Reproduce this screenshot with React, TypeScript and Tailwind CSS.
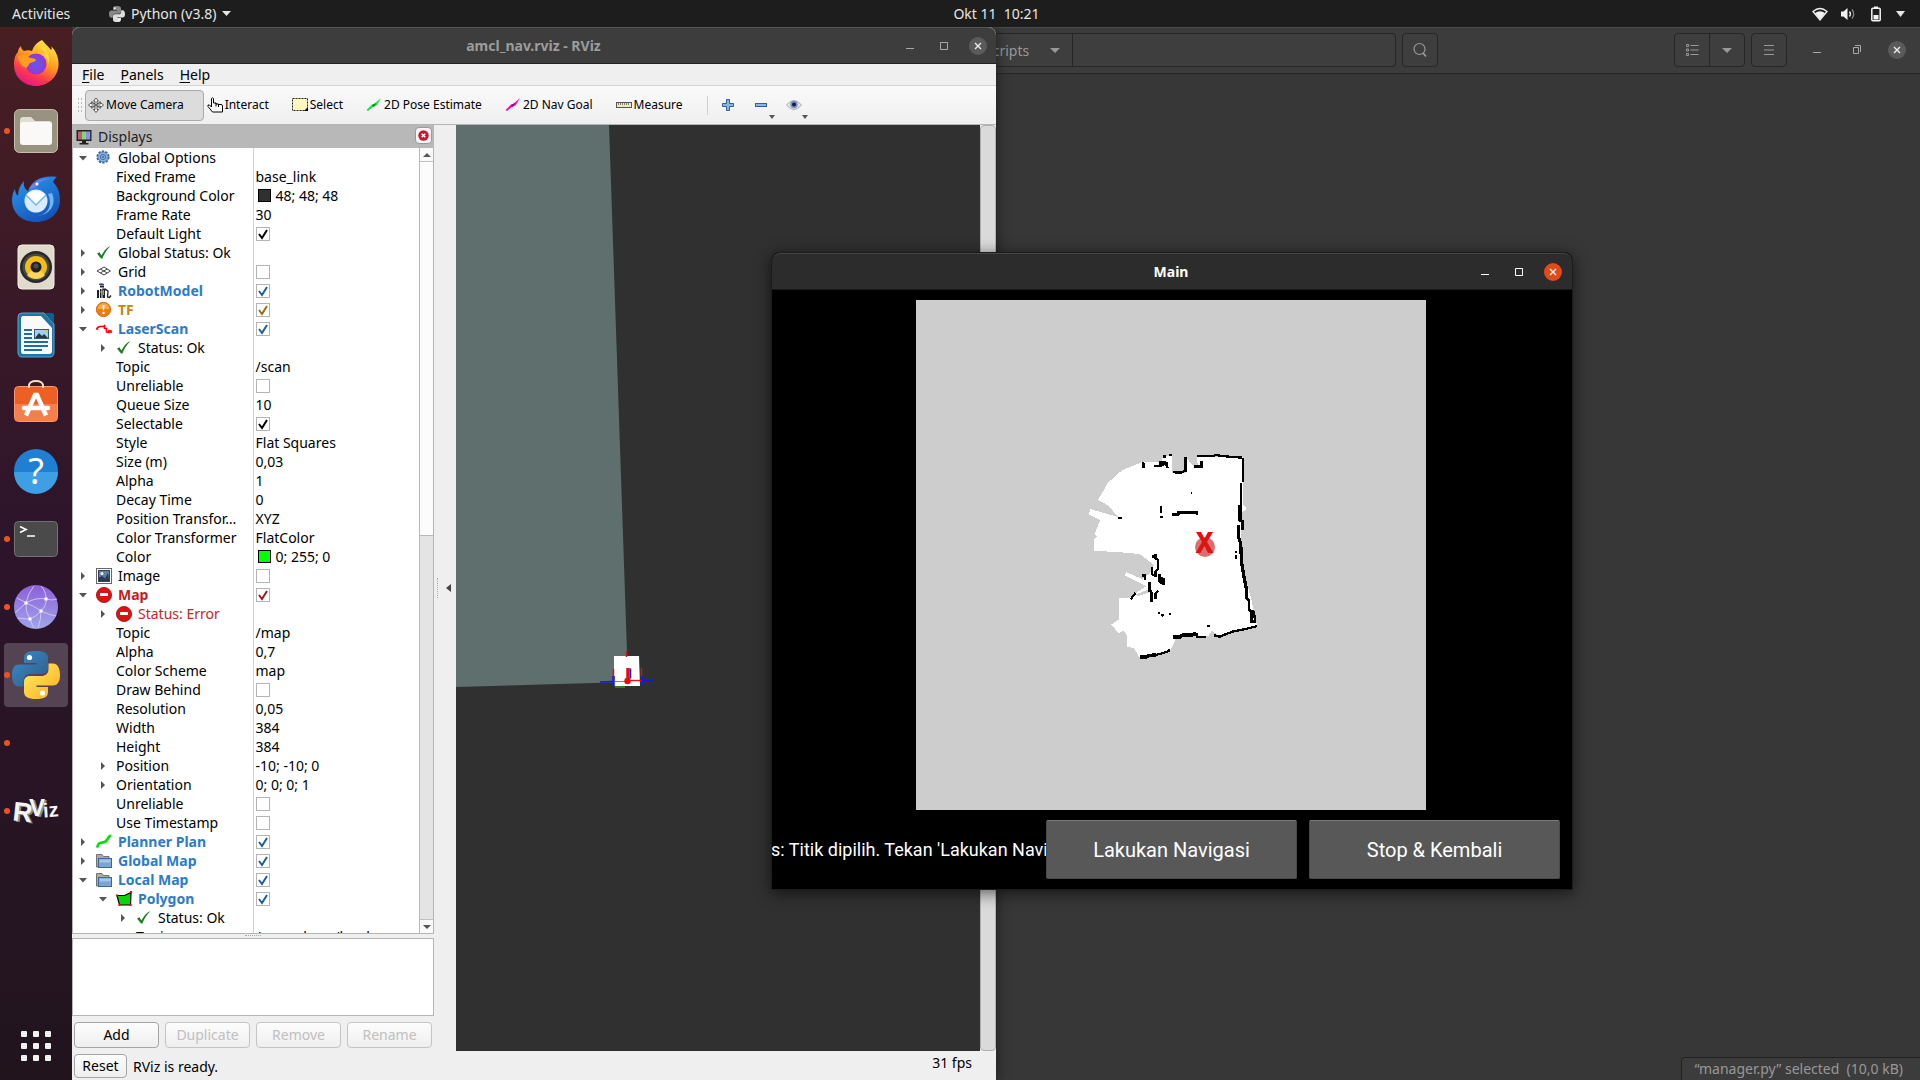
import React from "react";

const CHECK = "M3 7 L6 11 L11 3";

type IconName =
  | "gear" | "ok" | "grid" | "robot" | "warn" | "laser" | "image" | "error" | "plan" | "folder" | "polygon";

type Tone = "plain" | "blue" | "amber" | "red" | "redtext";

interface Row {
  level: number;
  label: string;
  arrow?: "open" | "closed";
  icon?: IconName;
  tone?: Tone;
  value?: string;
  check?: boolean;
  swatch?: "dark" | "green";
}

const rows: Row[] = [
  { level: 0, label: "Global Options", arrow: "open", icon: "gear" },
  { level: 1, label: "Fixed Frame", value: "base_link" },
  { level: 1, label: "Background Color", value: "48; 48; 48", swatch: "dark" },
  { level: 1, label: "Frame Rate", value: "30" },
  { level: 1, label: "Default Light", check: true },
  { level: 0, label: "Global Status: Ok", arrow: "closed", icon: "ok" },
  { level: 0, label: "Grid", arrow: "closed", icon: "grid", check: false },
  { level: 0, label: "RobotModel", arrow: "closed", icon: "robot", tone: "blue", check: true },
  { level: 0, label: "TF", arrow: "closed", icon: "warn", tone: "amber", check: true },
  { level: 0, label: "LaserScan", arrow: "open", icon: "laser", tone: "blue", check: true },
  { level: 1, label: "Status: Ok", arrow: "closed", icon: "ok" },
  { level: 1, label: "Topic", value: "/scan" },
  { level: 1, label: "Unreliable", check: false },
  { level: 1, label: "Queue Size", value: "10" },
  { level: 1, label: "Selectable", check: true },
  { level: 1, label: "Style", value: "Flat Squares" },
  { level: 1, label: "Size (m)", value: "0,03" },
  { level: 1, label: "Alpha", value: "1" },
  { level: 1, label: "Decay Time", value: "0" },
  { level: 1, label: "Position Transfor…", value: "XYZ" },
  { level: 1, label: "Color Transformer", value: "FlatColor" },
  { level: 1, label: "Color", value: "0; 255; 0", swatch: "green" },
  { level: 0, label: "Image", arrow: "closed", icon: "image", check: false },
  { level: 0, label: "Map", arrow: "open", icon: "error", tone: "red", check: true },
  { level: 1, label: "Status: Error", arrow: "closed", icon: "error", tone: "redtext" },
  { level: 1, label: "Topic", value: "/map" },
  { level: 1, label: "Alpha", value: "0,7" },
  { level: 1, label: "Color Scheme", value: "map" },
  { level: 1, label: "Draw Behind", check: false },
  { level: 1, label: "Resolution", value: "0,05" },
  { level: 1, label: "Width", value: "384" },
  { level: 1, label: "Height", value: "384" },
  { level: 1, label: "Position", arrow: "closed", value: "-10; -10; 0" },
  { level: 1, label: "Orientation", arrow: "closed", value: "0; 0; 0; 1" },
  { level: 1, label: "Unreliable", check: false },
  { level: 1, label: "Use Timestamp", check: false },
  { level: 0, label: "Planner Plan", arrow: "closed", icon: "plan", tone: "blue", check: true },
  { level: 0, label: "Global Map", arrow: "closed", icon: "folder", tone: "blue", check: true },
  { level: 0, label: "Local Map", arrow: "open", icon: "folder", tone: "blue", check: true },
  { level: 1, label: "Polygon", arrow: "open", icon: "polygon", tone: "blue", check: true },
  { level: 2, label: "Status: Ok", arrow: "closed", icon: "ok" },
  { level: 2, label: "Topic", value: "/move_base/local_cos…" },
];

const toneClass: Record<Tone, string> = {
  plain: "text-black",
  blue: "font-bold text-[#2b7bc8]",
  amber: "font-bold text-[#c8860a]",
  red: "font-bold text-[#c41e1e]",
  redtext: "text-[#cc2222]",
};

const checkClass: Record<Tone, string> = {
  plain: "text-black",
  blue: "text-[#1f5f9f]",
  amber: "text-[#a06a10]",
  red: "text-[#a01818]",
  redtext: "text-[#a01818]",
};

const indentClass = ["pl-0.5", "pl-[22px]", "pl-[42px]"];

function TreeIcon({ name }: { name: IconName }) {
  const box = "block h-4 w-4 shrink-0";
  switch (name) {
    case "gear":
      return (
        <svg className={box} viewBox="0 0 16 16">
          <circle cx="7" cy="7" r="5.6" fill="none" stroke="#3465a4" strokeWidth="2" strokeDasharray="2.4 1.1" />
          <circle cx="7" cy="7" r="4.9" fill="#8fb3de" stroke="#4a7ab8" strokeWidth="0.8" />
          <circle cx="7" cy="7" r="2.6" fill="none" stroke="#3465a4" strokeWidth="0.9" />
          <circle cx="7" cy="7" r="1" fill="#3465a4" />
        </svg>
      );
    case "ok":
      return (
        <svg className={box} viewBox="0 0 16 16">
          <path d="M1 8.6 3.4 7.2 5.4 10.6C7.6 6.4 10 3.2 13.6 1.2l.2.5C10.6 4.8 8.3 8.6 6.4 13.4L5 13.6Z" fill="#1e7d22" />
        </svg>
      );
    case "grid":
      return (
        <svg className={box} viewBox="0 0 16 16" fill="none" stroke="#444" strokeWidth="1">
          <path d="M1 7 8 3 14.5 7 8 11Z M4.3 5 11.2 9 M4.3 9 11.2 5" />
        </svg>
      );
    case "robot":
      return (
        <svg className={box} viewBox="0 0 16 16">
          <path d="M3 1q2-1.5 5 0v1H3z" fill="#2847b5" />
          <path d="M4 2.500h4v2H4z" fill="#222" />
          <path d="M1 7h2v8H1zM4 6h1.500v9H4zM6.200 5.500H10v2H9V15H6.500z" fill="#222" />
          <path d="M10 6.500 12 8l-.5 6 2 .5 1.500-2" fill="none" stroke="#222" strokeWidth="1.300" />
          <path d="M3 9h4M7.500 7v5" stroke="#bbb" strokeWidth="0.800" />
        </svg>
      );
    case "warn":
      return (
        <svg className={box} viewBox="0 0 16 16">
          <circle cx="7.500" cy="7.500" r="7.200" fill="#f07c0a" stroke="#c65f08" strokeWidth="0.800" />
          <path d="M1.500 7a6 6 0 0 1 12 0Z" fill="#f9a548" />
          <path d="M6.500 3h2l-.4 5.500h-1.200z" fill="#fff" />
          <circle cx="7.500" cy="11" r="1.200" fill="#fff" />
        </svg>
      );
    case "laser":
      return (
        <svg className={box} viewBox="0 0 16 16" fill="none" stroke="#f00" strokeWidth="1.700" strokeLinejoin="round">
          <path d="M0 8H1.500V6.500L4 5.500H7.500L8.500 4.500V7.500H10.500V11L13 11.500V9.500L15 10V12" />
        </svg>
      );
    case "image":
      return (
        <svg className={box} viewBox="0 0 16 16">
          <rect x="0.500" y="0.500" width="15" height="15" fill="#fff" stroke="#666" />
          <rect x="2.500" y="2.500" width="11" height="11" fill="#5d7fae" stroke="#32435f" />
          <path d="M3 9.500 6 8l3 2.500L12 5l1 6v2H3z" fill="#2b3a50" />
          <circle cx="6" cy="5.500" r="1.500" fill="#fdf6c0" />
        </svg>
      );
    case "error":
      return (
        <svg className={box} viewBox="0 0 16 16">
          <circle cx="8" cy="8" r="7.600" fill="#dd1212" stroke="#a30b0b" strokeWidth="0.800" />
          <rect x="4" y="6" width="8" height="3" rx="0.500" fill="#fff" />
        </svg>
      );
    case "plan":
      return (
        <svg className={box} viewBox="0 0 16 16">
          <path d="M1.500 12.500C3 7 5.500 9.500 8.500 8 12 6.500 12 3 14 2" fill="none" stroke="#0adf0a" strokeWidth="2.800" strokeLinecap="round" />
        </svg>
      );
    case "folder":
      return (
        <svg className={box} viewBox="0 0 16 16">
          <path d="M.5 14V1.500h5.500l1.500 2H13V14z" fill="#aaa" stroke="#666" strokeWidth="0.900" />
          <rect x="2.500" y="5.500" width="13" height="9" fill="#7ba5d8" stroke="#3b66a0" />
          <path d="M3.500 6.500h11v3h-11z" fill="#a5c4ea" />
        </svg>
      );
    case "polygon":
      return (
        <svg className={box} viewBox="0 0 16 16">
          <path d="M1 4.500 8.500 4.500 15 1.500 14.500 14H3.500z" fill="#0bd40b" stroke="#000" strokeWidth="1.200" />
          <path d="M0 3.500h2v2H0zM14 0h2v2h-2zM13.500 13h2v2h-2zM2.500 13h2v2h-2z" fill="#f00" />
        </svg>
      );
  }
}

function TreeArrow({ state }: { state?: "open" | "closed" }) {
  return (
    <span className="flex w-[15px] shrink-0 justify-center">
      {state && (
        <svg width="8" height="8" viewBox="0 0 8 8" fill="#555" aria-hidden="true">
          <path d={state === "open" ? "M0 2h8L4 6.500z" : "M2 0v8L6 4z"} />
        </svg>
      )}
    </span>
  );
}

function TreeRow({ row, id }: { row: Row; id: string }) {
  const tone = row.tone ?? "plain";
  return (
    <tr className="h-[19px]">
      <td className="overflow-hidden border-r border-[#d4d4d4] p-0">
        <div className={"flex h-[19px] items-center whitespace-nowrap " + indentClass[row.level]}>
          <TreeArrow state={row.arrow} />
          {row.icon ? (
            <span className="mx-[6px]"><TreeIcon name={row.icon} /></span>
          ) : (
            <span className="w-[6px] shrink-0" />
          )}
          {row.check === undefined ? (
            <span className={toneClass[tone]}>{row.label}</span>
          ) : (
            <label htmlFor={id} className={toneClass[tone]}>{row.label}</label>
          )}
        </div>
      </td>
      <td className="overflow-hidden p-0">
        <div className="flex h-[19px] items-center whitespace-nowrap pl-0.5">
          {row.check !== undefined && (
            <span className="relative h-[14px] w-[14px]">
              <input id={id} type="checkbox" defaultChecked={row.check} className="peer block h-[14px] w-[14px] appearance-none border border-[#b4b4b4] bg-white" />
              <svg viewBox="0 0 14 14" className={"pointer-events-none invisible absolute inset-0 h-[14px] w-[14px] peer-checked:visible " + checkClass[tone]} fill="none" stroke="currentColor" strokeWidth="2">
                <path d={CHECK} />
              </svg>
            </span>
          )}
          {row.swatch === "dark" && <span className="ml-0.5 mr-[5px] h-[13px] w-[13px] border border-black bg-[#303030]" />}
          {row.swatch === "green" && <span className="ml-0.5 mr-[5px] h-[13px] w-[13px] border border-black bg-[#00ff00]" />}
          {row.value}
        </div>
      </td>
    </tr>
  );
}

function PythonLogo({ mono }: { mono?: boolean }) {
  return (
    <svg viewBox="0 0 48 48" className="h-full w-full">
      <defs>
        <linearGradient id="pyBlue" x1="0" y1="0" x2="1" y2="1"><stop offset="0" stopColor="#3b8ccb" /><stop offset="1" stopColor="#2c5b85" /></linearGradient>
        <linearGradient id="pyYellow" x1="0" y1="0" x2="1" y2="1"><stop offset="0" stopColor="#ffec6a" /><stop offset="1" stopColor="#fcae1a" /></linearGradient>
      </defs>
      <path d="M24 0c-9 0-12 2.500-12 7v5h12.500v1.500H7C2 13.500 0 18 0 24s2 11.500 7 11.500h4.500V30c0-4.500 3-7 7.500-7h11c4 0 6-2.500 6-6V7c0-4.500-4-7-12-7Z" fill={mono ? "#888" : "url(#pyBlue)"} />
      <path d="M24 48c9 0 12-2.500 12-7v-5H24.500v-1.500H41c5 0 7-4.500 7-10.500s-2-11.500-7-11.500h-4.500V18c0 4.500-3 7-7.500 7H18c-4 0-6 2.500-6 6v10c0 4.500 4 7 12 7Z" fill={mono ? "#ddd" : "url(#pyYellow)"} />
      <circle cx="17.500" cy="6.500" r="2.600" fill="#fff" />
      <circle cx="30.500" cy="42" r="2.600" fill="#fff" />
    </svg>
  );
}

const dock: { name: string; dot?: boolean; active?: boolean; art: React.ReactNode }[] = [
  {
    name: "Firefox",
    art: (
      <svg viewBox="0 0 48 48" className="h-12 w-12">
        <defs>
          <linearGradient id="ffBody" x1="0.800" y1="0" x2="0.300" y2="1"><stop offset="0" stopColor="#fff04a" /><stop offset="0.450" stopColor="#ff9a1f" /><stop offset="0.750" stopColor="#ff3a4a" /><stop offset="1" stopColor="#e3138a" /></linearGradient>
          <radialGradient id="ffGlobe"><stop offset="0" stopColor="#5a5cf0" /><stop offset="1" stopColor="#9a35d0" /></radialGradient>
        </defs>
        <path d="M30 1c4 5 7 7 9 10 1-1 1-2 0-4 5 5 8 12 7.500 19C46 38 36 47 24 47S2 38 2 26c0-6 1-10 4-13 0-2 1-4 3-6 0 2 1 4 3 5 3-1 5-1 8 0 2-6 6-9 10-11Z" fill="url(#ffBody)" />
        <circle cx="24" cy="25" r="10.500" fill="url(#ffGlobe)" />
        <path d="M6 17c5-2 9-1 12 2 3 0 6 1 6 2-1 2-4 2-6 3-2 2-2 4-4 5-5-2-8-7-8-12Z" fill="#ff9c22" />
        <path d="M30 5c5 6 8 12 7 20-1-5-4-9-8-11 2 0 4 1 5 2-1-4-4-6-6-7Z" fill="#ffdc3c" />
      </svg>
    ),
  },
  {
    name: "Files",
    dot: true,
    art: (
      <svg viewBox="0 0 48 48" className="h-12 w-12">
        <rect x="2.500" y="2.500" width="43" height="43" rx="5" fill="#99927f" stroke="#c5bfae" />
        <path d="M8 13q0-3 3-3h8l4 4h14q3 0 3 3v5H8z" fill="#e2ded3" />
        <rect x="8" y="15" width="32" height="23" rx="3" fill="#faf9f7" />
      </svg>
    ),
  },
  {
    name: "Thunderbird",
    art: (
      <svg viewBox="0 0 48 48" className="h-12 w-12">
        <defs><linearGradient id="tb" x1="0" y1="0" x2="0.600" y2="1"><stop offset="0" stopColor="#2c9df5" /><stop offset="1" stopColor="#1554b8" /></linearGradient></defs>
        <path d="M12 6c-1 5 1 8 4 10C20 5 30 0 45 2c-2 1-3 3-4 5 5 5 7 11 7 18 0 13-10 22-24 22S0 38 0 25c0-4 1-8 3-11 0 3 1 5 3 7 0-6 2-11 6-15Z" fill="url(#tb)" />
        <path d="M17 15c4-8 11-12 21-11-8 1-12 4-14 8z" fill="#7a78e8" />
        <path d="M36 19c5 12 0 21-12 22 14-1 21-11 16-23Z" fill="#6ab8fa" />
        <circle cx="24" cy="26" r="11.500" fill="#d8ecfd" />
        <path d="M14 20q10-8 20 0L24.500 30z" fill="#fff" />
        <path d="M14 20l10 10 10-10" fill="none" stroke="#74b7f0" strokeWidth="1.500" />
        <circle cx="25" cy="9" r="1.500" fill="#fff" />
      </svg>
    ),
  },
  {
    name: "Rhythmbox",
    art: (
      <svg viewBox="0 0 48 48" className="h-12 w-12">
        <rect x="6" y="2" width="36" height="44" rx="4" fill="#dfdacb" stroke="#f3f0e6" />
        <circle cx="24" cy="24" r="16" fill="#26282c" />
        <circle cx="24" cy="24" r="13.500" fill="#4a4a42" />
        <circle cx="24" cy="24" r="11" fill="#f3bd18" />
        <path d="M24 24 15 32a12 12 0 0 0 18 0z" fill="#fbd65a" />
        <circle cx="24" cy="24" r="5.500" fill="#1d1f22" />
        <circle cx="24" cy="23" r="2.500" fill="#4a4d50" />
      </svg>
    ),
  },
  {
    name: "LibreOffice Writer",
    art: (
      <svg viewBox="0 0 48 48" className="h-12 w-12">
        <path d="M10 2h22l10 11v28q0 5-4 5H10q-4 0-4-5V6q0-4 4-4Z" fill="#1b77a8" stroke="#54a8d0" />
        <path d="M33 2h7q2 0 2 2v8Z" fill="#0e5f92" />
        <path d="M11 5h18l11 12v23q0 3-3 3H11q-2 0-2-3V8q0-3 2-3Z" fill="#fafafa" />
        <path d="M12 19h8M12 23h8M12 27h8M12 31h24M12 35h24M12 39h18" stroke="#1b6fa5" strokeWidth="1.800" />
        <rect x="22.500" y="18.500" width="14" height="9" fill="#9fd0ee" stroke="#2a5f80" />
        <path d="M23 27l4-5 3 3 2-2 4 4z" fill="#333" />
        <path d="M32 19h4v4z" fill="#f4c430" />
      </svg>
    ),
  },
  {
    name: "Ubuntu Software",
    art: (
      <svg viewBox="0 0 48 48" className="h-12 w-12">
        <rect x="2.500" y="7.500" width="43" height="35" rx="4" fill="#ee5f25" stroke="#f79a6e" />
        <path d="M3 25h42v14q0 3-3 3H6q-3 0-3-3z" fill="#f47f4d" />
        <path d="M17 9V6q1-4 7-4t7 4v3" fill="none" stroke="#f4dfc0" strokeWidth="2" />
        <path d="M14 36.500 23 16h2l9 20.500" fill="none" stroke="#fff" strokeWidth="4.500" />
        <path d="M12 29h24" stroke="#fff" strokeWidth="4.500" strokeLinecap="round" />
      </svg>
    ),
  },
  {
    name: "Help",
    art: (
      <svg viewBox="0 0 48 48" className="h-12 w-12">
        <circle cx="24" cy="24" r="22" fill="#1f7fd2" />
        <path d="M2 25a22 22 0 0 0 44 0z" fill="#3f9fe4" />
        <text x="24" y="37" textAnchor="middle" fontFamily="Noto Sans, sans-serif" fontSize="36" fill="#fff">?</text>
      </svg>
    ),
  },
  {
    name: "Terminal",
    dot: true,
    art: (
      <svg viewBox="0 0 48 48" className="h-12 w-12">
        <rect x="2.500" y="6.500" width="43" height="35" rx="4" fill="#4a4a4a" stroke="#727272" />
        <path d="M8 11.500l6 3-6 3M15 21h8" fill="none" stroke="#fff" strokeWidth="1.700" />
      </svg>
    ),
  },
  {
    name: "Network",
    dot: true,
    art: (
      <svg viewBox="0 0 48 48" className="h-12 w-12">
        <defs><linearGradient id="net" x1="0" y1="0" x2="0" y2="1"><stop offset="0" stopColor="#8d5fd8" /><stop offset="1" stopColor="#9fa6ec" /></linearGradient></defs>
        <circle cx="24" cy="24" r="22" fill="url(#net)" />
        <path d="M5 15q10 5 9 5Q24 14 34 16q6 2 11 0M14 20q8 3 15 8 8 4 15 5M14 20q-1 9 4 16 2 6 4 9M34 16q1 6-5 12-4 5-11 8-6 0-12-1M34 16q0-8-5-13M14 20q2-10 8-17M3 30l11-10M29 28q0 9-3 17" fill="none" stroke="#d9c8f6" strokeWidth="0.900" />
        <path d="M12.500 18.500h3v3h-3zM32.500 14.500h3v3h-3zM27.500 26.500h3v3h-3zM16.500 34.500h3v3h-3z" fill="#fff" />
      </svg>
    ),
  },
  { name: "Python (v3.8)", dot: true, active: true, art: <span className="block h-12 w-12"><PythonLogo /></span> },
  { name: "Running application", dot: true, art: null },
  {
    name: "RViz",
    dot: true,
    art: (
      <svg viewBox="0 0 48 48" className="h-12 w-12" fontFamily="Liberation Sans, sans-serif" fontWeight="bold">
        <g fill="#888">
          <text x="3" y="35" fontSize="27" transform="rotate(6 8 24)">R</text>
          <text x="19" y="30" fontSize="24">V</text>
        </g>
        <g fill="#f5f5f5">
          <text x="1" y="34" fontSize="27" transform="rotate(6 8 24)">R</text>
          <text x="17" y="29" fontSize="24">V</text>
          <text x="31" y="30" fontSize="20" transform="rotate(-4 38 24)">iz</text>
        </g>
      </svg>
    ),
  },
];

function Dock() {
  return (
    <nav aria-label="Dock" className="flex w-[72px] shrink-0 flex-col bg-linear-to-b from-[#481e22] via-[#2d142b] via-50% to-[#21141d] pt-0.5">
      {dock.map((d) => (
        <div key={d.name} className="relative flex h-[68px] items-center justify-center">
          <button aria-label={d.name} className={"flex h-16 w-16 items-center justify-center rounded " + (d.active ? "bg-white/20" : "")}>{d.art}</button>
          {d.dot && <span className="absolute left-1 h-1.5 w-1.5 rounded-full bg-[#e95420]" />}
        </div>
      ))}
      <button aria-label="Show Applications" className="mx-auto mb-[19px] mt-auto grid grid-cols-3 gap-1.5">
        {Array.from({ length: 9 }, (_, i) => (
          <span key={i} className="h-1.5 w-1.5 rounded-[1px] bg-[#f2f2f2]" />
        ))}
      </button>
    </nav>
  );
}

function TopBar() {
  return (
    <header className="grid h-[27px] shrink-0 grid-cols-3 items-center bg-[#1d1d1d] text-[14px] text-[#e6e6e6]">
      <div className="flex items-center pl-3">
        <button className="w-[63px] text-left">Activities</button>
        <button className="ml-[34px] flex items-center gap-1.5">
          <span className="h-4 w-4"><PythonLogo mono /></span>
          Python (v3.8)
          <Caret className="h-[5px] w-[9px]" />
        </button>
      </div>
      <button className="justify-self-center whitespace-pre pl-[73px]">{"Okt 11  10:21"}</button>
      <button aria-label="System menu" className="flex items-center gap-3 justify-self-end pr-[15px]">
        <svg width="16" height="14" viewBox="0 0 16 14">
          <path d="M1 4.500Q8-1.500 15 4.500L8 13z" fill="none" stroke="#f2f2f2" strokeWidth="1.300" />
          <path d="M3 6q5-3.500 10 0L8 12.500z" fill="#f2f2f2" />
        </svg>
        <svg width="16" height="14" viewBox="0 0 16 14">
          <path d="M1 4.500h2.500L7.500 1v12L3.500 9.500H1z" fill="#f2f2f2" />
          <path d="M9.500 4.500q2 2.500 0 5" fill="none" stroke="#f2f2f2" strokeWidth="1.300" />
          <path d="M12 2.500q3.500 4.500 0 9" fill="none" stroke="#888" strokeWidth="1.300" />
        </svg>
        <svg width="16" height="16" viewBox="0 0 16 16">
          <path d="M6 0.500h4v2H6z" fill="#f2f2f2" />
          <rect x="3.800" y="2.200" width="8.400" height="12.600" rx="1" fill="none" stroke="#f2f2f2" strokeWidth="1.500" />
          <rect x="5.500" y="9" width="5" height="4.500" fill="#f2f2f2" />
        </svg>
        <Caret className="h-[6px] w-[9px]" />
      </button>
    </header>
  );
}

function Caret({ className }: { className: string }) {
  return (
    <svg viewBox="0 0 10 6" preserveAspectRatio="none" className={"fill-current " + className} aria-hidden="true">
      <path d="M0 0h10L5 6z" />
    </svg>
  );
}

function WindowButtons({ variant }: { variant: "plain" | "active" | "restore" }) {
  const close = variant === "active" ? "bg-[#e2491b] text-white" : "bg-[#5a5a5a] text-[#f0f0f0]";
  const tone = variant === "active" ? "text-white" : "text-[#a8a8a8]";
  const gap = variant === "restore" ? "gap-[22px]" : "gap-4";
  return (
    <div className={"flex items-center " + gap + " " + tone}>
      <button aria-label="Minimize" className="grid h-[18px] w-[18px] place-items-center">
        <svg width="10" height="10" viewBox="0 0 10 10"><path d="M1 7.500h8" stroke="currentColor" /></svg>
      </button>
      <button aria-label="Maximize" className="grid h-[18px] w-[18px] place-items-center">
        {variant === "restore" ? (
          <svg width="10" height="10" viewBox="0 0 10 10" fill="none" stroke="currentColor"><path d="M1.500 2.500h5v6h-5zM3 .5h5.500V7" /></svg>
        ) : (
          <svg width="10" height="10" viewBox="0 0 10 10" fill="none" stroke="currentColor"><path d="M1.500 1.500h7v7h-7z" /></svg>
        )}
      </button>
      <button aria-label="Close" className={"grid h-[18px] w-[18px] place-items-center rounded-full " + close}>
        <svg width="8" height="8" viewBox="0 0 8 8"><path d="M1 1l6 6M7 1L1 7" stroke="currentColor" strokeWidth="1.300" /></svg>
      </button>
    </div>
  );
}

function FilesWindow() {
  const frame = "border border-[#262626] bg-[#3e3e3e]";
  return (
    <section aria-label="Files" className="flex h-full flex-col bg-[#373737] text-[#989898]">
      <header className="flex h-[47px] shrink-0 items-center border-b border-t border-b-[#262626] border-t-[#4c4c4c] bg-[#3c3c3c] pb-px pr-3.5">
        <span className="w-1/2" />
        <div className="flex">
          <button className={"-ml-3 flex h-[34px] w-[96px] items-center justify-between pl-2 pr-3 text-[14px] " + frame}>
            scripts
            <Caret className="h-[5px] w-[10px]" />
          </button>
          <input aria-label="Location" className={"h-[34px] w-[323px] rounded-r border-l-0 outline-none " + frame} />
        </div>
        <button aria-label="Search" className={"ml-1.5 grid h-[34px] w-9 place-items-center rounded " + frame}>
          <svg width="16" height="16" viewBox="0 0 16 16" fill="none" stroke="currentColor" strokeWidth="1.200"><circle cx="7.500" cy="7" r="5.500" /><path d="M11 11l3 3.500" strokeWidth="1.800" /></svg>
        </button>
        <div className="ml-auto flex">
          <button aria-label="List view" className={"grid h-[34px] w-9 place-items-center rounded-l " + frame}>
            <svg width="14" height="14" viewBox="0 0 14 14" fill="none" stroke="currentColor"><path d="M1.500 1.500h2v2h-2zM1.500 6h2v2h-2zM1.500 10.500h2v2h-2z" /><path d="M5.500 2.500h8M5.500 7h8M5.500 11.500h8" strokeWidth="1.200" /></svg>
          </button>
          <button aria-label="View options" className={"-ml-px grid h-[34px] w-9 place-items-center rounded-r " + frame}><Caret className="h-[5px] w-[10px]" /></button>
        </div>
        <button aria-label="Menu" className={"ml-1.5 mr-[21px] grid h-[34px] w-9 place-items-center rounded " + frame}>
          <svg width="12" height="12" viewBox="0 0 12 12" stroke="currentColor" strokeWidth="1.200"><path d="M1 1.500h10M1 6h10M1 10.500h10" /></svg>
        </button>
        <WindowButtons variant="restore" />
      </header>
      <div className="flex-1" />
      <p className="self-end whitespace-pre rounded-tl border-l border-t border-[#222] bg-[#3c3c3c] pl-3 pr-[17px] text-[14px] leading-[22px]">{"“manager.py” selected  (10,0 kB)"}</p>
    </section>
  );
}

function ToolIcon({ name }: { name: string }) {
  const box = "block h-4 w-4";
  switch (name) {
    case "move":
      return (
        <svg className={box} viewBox="0 0 16 16" fill="#fff" stroke="#444" strokeWidth="0.900">
          <path d="M8 1l2.500 3H9v3h3.500V5.500L15.500 8l-3 2.500V9H9v3.500h1.500L8 15.500l-2.500-3H7V9H3.500v1.500L.5 8l3-2.500V7H7V4H5.500z" />
          <path d="M3.500 4.500 12.500 11.500M12.500 4.500 3.500 11.500" />
        </svg>
      );
    case "hand":
      return (
        <svg className={box} viewBox="0 0 16 16" fill="#fff" stroke="#000" strokeWidth="1">
          <path d="M4.500 10V1.500q1-1.500 2 0V6h2.500v1h2.500v.5H14q1.500 0 1.500 1.500v6h-10L1 9.500V8h1.500z" />
          <path d="M9 6v3.500M11.500 7v3" />
        </svg>
      );
    case "select":
      return (
        <svg className={box} viewBox="0 0 16 16">
          <rect x="0.500" y="1.500" width="15" height="12" fill="#fff6c0" stroke="#222" strokeDasharray="2 1" />
          <path d="M12 14l4-4v4z" fill="#000" />
        </svg>
      );
    case "pose":
      return <svg className={box} viewBox="0 0 16 16"><path d="M.5 13l5.500-5.500h1.500L15 1l-4.500 7.500-2.500.5-6 5z" fill="#0bea32" /><path d="M6 8l4-2-1 3-2 1z" fill="#098a20" /></svg>;
    case "goal":
      return <svg className={box} viewBox="0 0 16 16"><path d="M.5 13l5.500-5.500h1.500L15 1l-4.500 7.500-2.500.5-6 5z" fill="#f50ad2" /><path d="M6 8l4-2-1 3-2 1z" fill="#8d0878" /></svg>;
    default:
      return (
        <svg className={box} viewBox="0 0 16 16">
          <rect x="0.500" y="5.500" width="15" height="5" fill="#f3e8b4" stroke="#555" />
          <path d="M2.500 6v2M4.500 6v2M6.500 6v2M8.500 6v2M10.500 6v2M12.500 6v2" stroke="#666" strokeWidth="0.800" />
        </svg>
      );
  }
}

const tools = [
  { icon: "move", label: "Move Camera", active: true },
  { icon: "hand", label: "Interact" },
  { icon: "select", label: "Select" },
  { icon: "pose", label: "2D Pose Estimate" },
  { icon: "goal", label: "2D Nav Goal" },
  { icon: "measure", label: "Measure" },
];

function Toolbar() {
  return (
    <div role="toolbar" className="flex h-[39px] shrink-0 items-center border-b border-[#b5b5b5] bg-linear-to-b from-[#fafafa] to-[#efefef] pl-[5px] text-[12px] text-black">
      <span className="mr-[3px] h-4 w-[5px] bg-[radial-gradient(#bbb_1px,transparent_1px)] bg-[size:3px_4px]" />
      {tools.map((t) => (
        <button
          key={t.label}
          className={"flex h-[31px] items-center gap-0.5 whitespace-nowrap rounded-sm border pl-0.5 pr-[19px] " + (t.active ? "border-[#aaa] bg-[#dcdcdc]" : "border-transparent")}
        >
          <ToolIcon name={t.icon} />
          {t.label}
        </button>
      ))}
      <span className="ml-1 mr-3 h-[19px] w-px bg-[#d0d0d0]" />
      <button aria-label="Add tool">
        <svg width="16" height="16" viewBox="0 0 16 16"><path d="M6.500 2.500h3v4h4v3h-4v4h-3v-4h-4v-3h4z" fill="#8db4e2" stroke="#2f5f9f" /></svg>
      </button>
      <button aria-label="Remove tool" className="relative ml-[17px]">
        <svg width="16" height="16" viewBox="0 0 16 16"><rect x="2.500" y="6.500" width="11" height="3" fill="#8db4e2" stroke="#2f5f9f" /></svg>
        <Caret className="absolute -bottom-1.5 -right-1.5 h-[4px] w-[6px] text-[#555]" />
      </button>
      <button aria-label="View options" className="relative ml-[17px]">
        <svg width="16" height="16" viewBox="0 0 16 16">
          <path d="M.5 8Q8-1 15.500 8 8 17 .5 8Z" fill="#e6e6e6" stroke="#aaa" />
          <circle cx="8" cy="7.500" r="3.800" fill="#7d92c8" /><circle cx="8" cy="7.500" r="2" fill="#141c40" />
        </svg>
        <Caret className="absolute -bottom-1.5 -right-1.5 h-[4px] w-[6px] text-[#555]" />
      </button>
    </div>
  );
}

function DisplaysPanel() {
  const btn = "h-[26px] flex-1 rounded-sm border bg-linear-to-b from-[#fdfdfd] to-[#eeeeee] leading-none";
  return (
    <div className="flex w-[362px] shrink-0 flex-col">
      <div className="flex h-[23px] shrink-0 items-center bg-[#b8b8b8] pl-1 pr-0.5 text-[#222]">
        <svg width="16" height="16" viewBox="0 0 16 16" className="mr-[6px]">
          <rect x="0.500" y="1" width="15" height="11" fill="#222" />
          <path d="M2 2.500h4v8H2z" fill="#b9606a" /><path d="M6 2.500h4v8H6z" fill="#7ed87e" /><path d="M10 2.500h4.200v8H10z" fill="#8f8fe0" />
          <path d="M6 12h4v2h2.500v1.500h-9V14H6z" fill="#222" />
        </svg>
        <h2>Displays</h2>
        <button aria-label="Close Displays" className="mb-0.5 ml-auto grid h-[17px] w-[17px] place-items-center rounded-sm border border-[#999] bg-[#f5f5f5]">
          <svg width="11" height="11" viewBox="0 0 11 11"><circle cx="5.500" cy="5.500" r="5.200" fill="#cc1433" /><path d="M3.700 3.700l3.600 3.600M7.300 3.700 3.700 7.300" stroke="#fff" strokeWidth="1.400" /></svg>
        </button>
      </div>
      <div className="flex min-h-0 flex-1 basis-0 overflow-hidden border-b border-l border-r border-[#b5b5b5] bg-white">
        <div className="min-w-0 flex-1 overflow-hidden">
          <table className="w-full table-fixed border-collapse leading-[19px]">
            <colgroup><col className="w-[180px]" /><col /></colgroup>
            <tbody>
              {rows.map((r, i) => (
                <TreeRow key={i} row={r} id={"display-" + i} />
              ))}
            </tbody>
          </table>
        </div>
        <div className="flex w-[14px] flex-col border-l border-[#b8b8b8] bg-[#e4e4e4] text-[#555]" aria-hidden="true">
          <span className="grid h-[14px] place-items-center border-b border-[#c0c0c0] bg-[#fafafa]"><Caret className="h-[4px] w-[8px] rotate-180" /></span>
          <span className="h-[374px] border-b border-[#b8b8b8] bg-[#fcfcfc]" />
          <span className="mt-auto grid h-[14px] place-items-center border-t border-[#c0c0c0] bg-[#fafafa]"><Caret className="h-[4px] w-[8px]" /></span>
        </div>
      </div>
      <span className="mx-auto mb-0.5 h-0.5 w-4 border-b border-dotted border-[#aaa]" />
      <textarea readOnly aria-label="Description" className="block h-[78px] shrink-0 resize-none border border-[#b5b5b5] bg-white outline-none" />
      <div className="mb-[3px] mt-1.5 flex shrink-0 gap-1.5 px-0.5">
        <button className={btn + " border-[#a5a5a5]"}>Add</button>
        <button disabled className={btn + " border-[#c4c4c4] text-[#c0c0c0]"}>Duplicate</button>
        <button disabled className={btn + " border-[#c4c4c4] text-[#c0c0c0]"}>Remove</button>
        <button disabled className={btn + " border-[#c4c4c4] text-[#c0c0c0]"}>Rename</button>
      </div>
    </div>
  );
}

function Scene() {
  return (
    <div className="relative min-w-0 flex-1 overflow-hidden bg-[#303030]">
      <svg width="524" height="600" viewBox="456 125 524 600" className="block">
        <path d="M456 125H609L628 682 456 687Z" fill="#5f6f6d" />
        <path d="M614 656h25l1 30h-26z" fill="#fff" />
        <path d="M626.500 651v6M613.500 669v9M641.500 668v8" stroke="#d01515" strokeWidth="1.500" />
        <path d="M600 682l14-.5M640 680.500h14" stroke="#1414e0" strokeWidth="1.500" />
        <path d="M613.500 676v10M642 676v9" stroke="#1a1ae0" strokeWidth="2.500" />
        <path d="M615 681.500h12M615 687h10" stroke="#22c322" strokeWidth="1.200" />
        <path d="M628 680.500h13" stroke="#f01010" strokeWidth="1.400" />
        <path d="M628 668v12" stroke="#e01010" strokeWidth="3.500" /><path d="M630.500 668.500v10" stroke="#1818e8" strokeWidth="1.500" />
        <circle cx="627.500" cy="681" r="3.200" fill="#e80c0c" />
      </svg>
    </div>
  );
}

function RvizWindow() {
  return (
    <section aria-label="RViz" className="absolute inset-y-0 left-0 flex w-1/2 flex-col rounded-t-lg bg-[#efefef] text-[14px] text-black shadow-[0_0_14px_rgba(0,0,0,0.55)]">
      <header className="flex h-[37px] shrink-0 items-center rounded-t-lg border-b border-t border-b-[#222] border-t-[#555] bg-[#3d3d3d] pr-[9px]">
        <h1 className="flex-1 pl-[94px] text-center font-bold text-[#9c9c9c]">amcl_nav.rviz - RViz</h1>
        <WindowButtons variant="plain" />
      </header>
      <div role="menubar" className="flex h-[22px] shrink-0 items-center gap-4 border-b border-[#d5d5d5] pl-2.5">
        {["File", "Panels", "Help"].map((m) => (
          <button key={m} role="menuitem"><span className="underline underline-offset-2">{m[0]}</span>{m.slice(1)}</button>
        ))}
      </div>
      <Toolbar />
      <div className="flex min-h-0 flex-1">
        <DisplaysPanel />
        <div className="flex w-[22px] shrink-0 items-center pl-[3px]">
          <span className="h-5 border-l border-dotted border-[#aaa]" />
          <button aria-label="Collapse panel" className="ml-2"><svg width="5" height="8" viewBox="0 0 5 8"><path d="M5 0v8L0 4z" fill="#444" /></svg></button>
        </div>
        <Scene />
        <span className="w-4 shrink-0 rounded border border-[#b0b0b0] bg-[#dadada]" />
      </div>
      <footer className="flex h-[29px] shrink-0 items-center pl-0.5 pr-6 pt-px">
        <button className="mr-1.5 h-6 w-[53px] rounded-sm border border-[#a5a5a5] bg-linear-to-b from-[#fdfdfd] to-[#eeeeee] leading-none">Reset</button>
        <span>RViz is ready.</span>
        <span className="ml-auto pb-2">31 fps</span>
      </footer>
    </section>
  );
}

function OccupancyMap() {
  return (
    <svg width="510" height="510" viewBox="0 0 510 510" className="block bg-[#cdcdcd]" role="img" aria-label="Occupancy map">
      <g transform="translate(143 130) scale(0.333333)" shapeRendering="crispEdges">
        <path
          fill="#fff"
          d="M248 97 308 95 312 78H340V128H380V80L402 108 416 104 414 80 552 82V225L560 230V240L548 246V300L545 330 550 410 575 500 595 590 480 617 458 602 448 618 418 622 412 608 345 622 350 630 335 660 242 682 225 655 205 650V620L195 602 178 610 157 583 180 568V503H212L232 488 262 468 197 436 202 427 250 447 272 432 285 405 245 374 215 369 105 362V330L115 320 107 312 124 270 90 253 93 237 180 262 145 225 117 210 135 180 145 160 190 120Z"
        />
        <path fill="#cdcdcd" d="M228 495 268 478 274 486 240 498Z" />
        <g fill="none" stroke="#000">
          <path strokeWidth="7" d="M413 78H465L470 75 490 78 510 80 550 83M552 85V155M547 160V230M343 124 350 128H365L380 122V80M311 80H322M330 76H340" />
          <path strokeWidth="8" d="M252 97 255 115M285 108H300L322 100 325 115M405 110H428V94M300 97H322" />
          <path strokeWidth="10" d="M543 225V270L550 275V300M538 285V320L545 340 548 400 555 440 562 475M338 254H355L362 248" />
          <path strokeWidth="8" d="M355 248H414V254M562 475V505L570 510V540L577 545V575H588V565L582 540" />
          <path strokeWidth="6" d="M307 228V250M304 261H312M396 190H400M177 264H187V268M530 364V370M530 376V386" />
          <path strokeWidth="7" d="M278 380H287M290 372V385L297 390V418L290 425V440M280 410V432L285 438M248 437H258V450M302 432V455L312 462M315 445V465M272 455V475L278 490V515M290 508V490L297 482M230 488 215 508" />
          <path strokeWidth="11" d="M341 622H362L370 616H395L412 610M242 681H262L268 677 290 675" />
          <path strokeWidth="7" d="M412 610 416 622H440M445 588H453M465 616 482 620 520 605 560 597 595 588M290 675 310 670 330 663V658M296 550H302M308 553 314 558M330 552H336" />
          <path strokeWidth="8" d="M308 440V455M272 460V485" />
        </g>
      </g>
      <path d="M280 232h5l3.500 6.500L292 232h5l-6 10 6.500 11h-5.500l-3.500-7-4 7h-5l6.500-11z" fill="#f70808" />
      <circle cx="289" cy="247" r="10" fill="#c92020" fillOpacity="0.650" />
    </svg>
  );
}

function MainWindow() {
  const btn = "h-[59px] w-[251px] shrink-0 rounded-[2px] border border-[#4a4a4a] border-t-[#7a7a7a] bg-[#585858] text-[20px] text-white";
  return (
    <section aria-label="Main" className="absolute left-[699px] top-[225px] w-[802px] rounded-t-lg border border-[#1c1c1c] bg-black shadow-[0_3px_16px_rgba(0,0,0,0.6)]">
      <header className="flex h-[37px] items-center rounded-t-lg border-b border-t border-b-[#1a1a1a] border-t-[#454545] bg-[#2c2c2c] pr-2.5">
        <h1 className="flex-1 pl-[94px] text-center text-[14px] font-bold text-white">Main</h1>
        <WindowButtons variant="active" />
      </header>
      <div className="flex justify-center pb-2.5 pr-0.5 pt-2.5">
        <OccupancyMap />
      </div>
      <div className="flex items-center gap-3 pb-2.5 pr-3 font-[Roboto,sans-serif]">
        <p className="-mr-3 flex min-w-0 flex-1 justify-center overflow-hidden whitespace-nowrap text-[18px] text-white">
          <span className="shrink-0">Status: Titik dipilih. Tekan 'Lakukan Navigasi'.</span>
        </p>
        <button className={btn}>Lakukan Navigasi</button>
        <button className={btn}>Stop &amp; Kembali</button>
      </div>
    </section>
  );
}

export default function App() {
  return (
    <div className="flex h-screen flex-col overflow-hidden bg-[#1d1d1d] font-['Noto_Sans','Open_Sans',sans-serif]">
      <TopBar />
      <div className="flex min-h-0 flex-1">
        <Dock />
        <main className="relative min-w-0 flex-1 overflow-hidden">
          <FilesWindow />
          <RvizWindow />
          <MainWindow />
        </main>
      </div>
    </div>
  );
}
